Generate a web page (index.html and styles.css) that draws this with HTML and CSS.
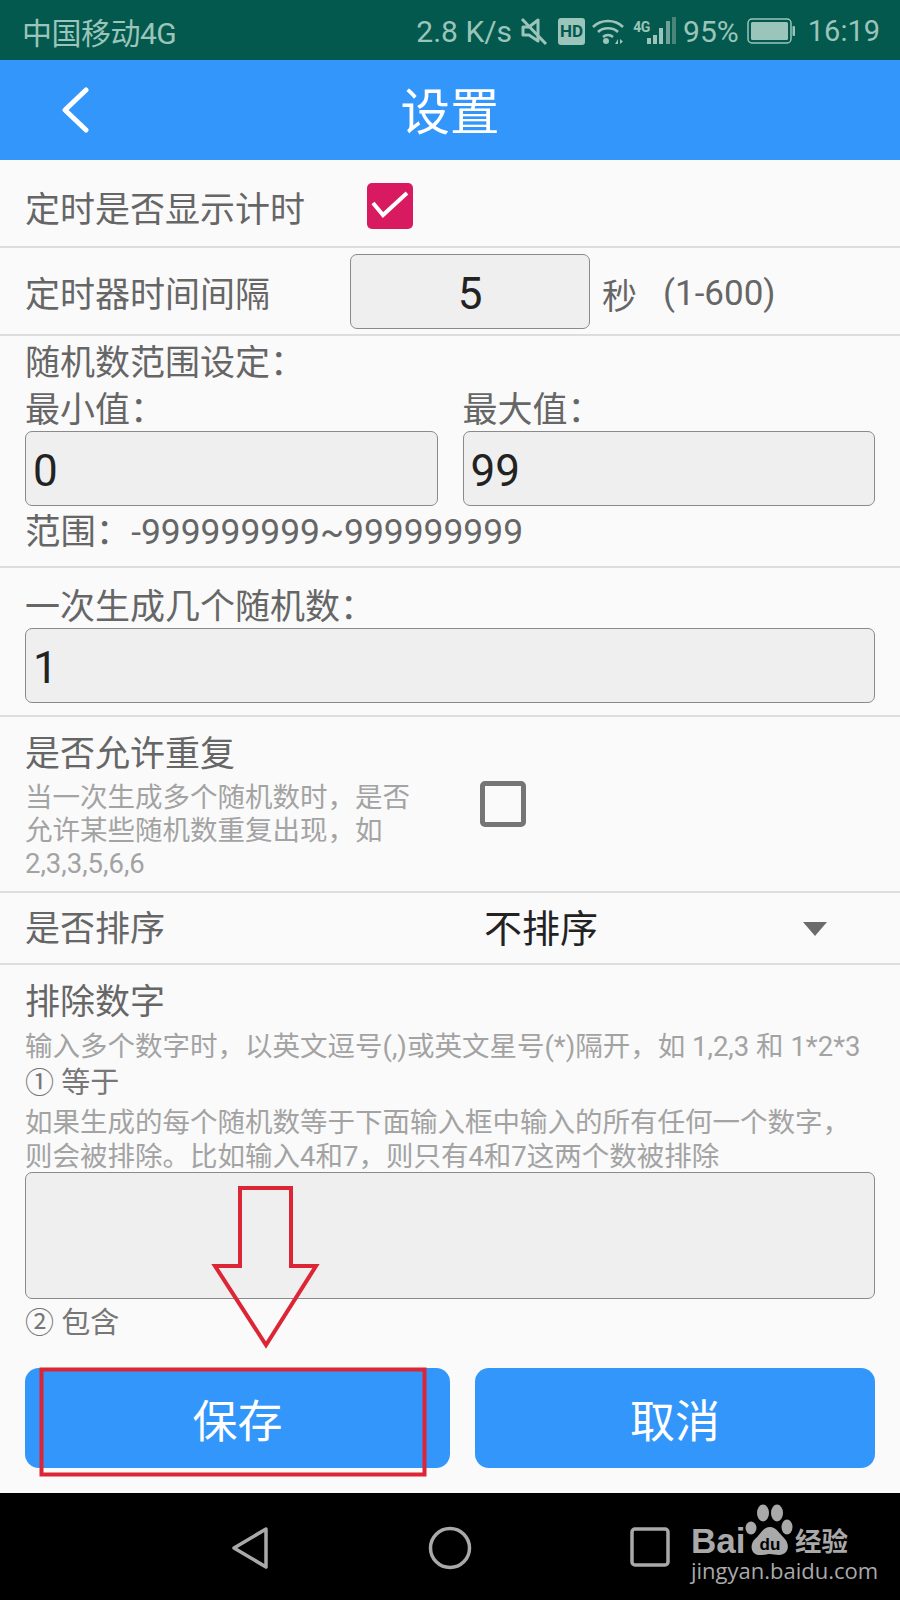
FILE: index.html
```html
<!DOCTYPE html>
<html lang="zh-CN">
<head>
<meta charset="utf-8">
<title>设置</title>
<link rel="stylesheet" href="styles.css">
</head>
<body>
<div class="phone">
  <div class="status">
    <span class="carrier">中国移动4G</span>
    <div class="status-right">
      <span class="speed">2.8 K/s</span>
      <svg class="ic-mute" viewBox="0 0 28 28" width="28" height="28"><path d="M3 10h6l9-7v21l-9-6H3z" fill="none" stroke="#9bc4ba" stroke-width="3" stroke-linejoin="round"/><path d="M2 2l24 25" stroke="#9bc4ba" stroke-width="3" fill="none"/></svg>
      <span class="hd">HD</span>
      <svg class="ic-wifi" viewBox="0 0 34 28" width="34" height="28"><path d="M2 10c8-8 22-8 30 0M7 15c5-5 15-5 20 0M12 20c3-2.500 7-2.500 10 0" fill="none" stroke="#9bc4ba" stroke-width="2.600"/><circle cx="15" cy="24" r="3" fill="#9bc4ba"/><path d="M24 27l3-5v5zM29 22l3 2.500-3 2.500z" fill="#9bc4ba"/></svg>
      <svg class="ic-signal" viewBox="0 0 30 28" width="30" height="28"><rect x="0" y="21" width="4" height="6" fill="#9bc4ba"/><rect x="6" y="18" width="4" height="9" fill="#9bc4ba"/><rect x="12" y="11" width="4" height="16" fill="#9bc4ba"/><rect x="19" y="4" width="4" height="23" fill="#6fa398"/><rect x="25" y="0" width="4" height="27" fill="#4a8579"/></svg>
      <span class="net">4G</span>
      <span class="pct">95%</span>
      <svg class="ic-batt" viewBox="0 0 48 26" width="48" height="26"><rect x="1" y="1" width="43" height="24" rx="4" fill="none" stroke="#9bc4ba" stroke-width="1.500"/><rect x="4" y="4" width="37" height="18" rx="1.500" fill="#9bc4ba"/><rect x="45.500" y="8" width="2.500" height="10" rx="1" fill="#9bc4ba"/></svg>
      <span class="time">16:19</span>
    </div>
  </div>

  <header class="header">
    <svg class="back" viewBox="0 0 28 46" width="28" height="46"><path d="M25 3L4 23l21 20" fill="none" stroke="#fff" stroke-width="5" stroke-linecap="round" stroke-linejoin="round"/></svg>
    <h1 class="title">设置</h1>
  </header>

  <main class="main">
    <div class="row row-show">
      <span class="label label-show">定时是否显示计时</span>
      <span class="check check-on">
        <svg viewBox="0 0 46 46" width="46" height="46"><path d="M6 20l10 12L40 10" fill="none" stroke="#fff" stroke-width="4"/></svg>
      </span>
    </div>

    <div class="row row-interval">
      <span class="label label-interval">定时器时间间隔</span>
      <div class="field field-interval">5</div>
      <span class="label unit">秒</span>
      <span class="label limit">(1-600)</span>
    </div>

    <section class="block block-range">
      <div class="label line-range">随机数范围设定：</div>
      <div class="minmax">
        <div class="col">
          <div class="label line-sub">最小值：</div>
          <div class="field">0</div>
        </div>
        <div class="col">
          <div class="label line-sub">最大值：</div>
          <div class="field">99</div>
        </div>
      </div>
      <div class="label line-limit">范围：-999999999~999999999</div>
    </section>

    <section class="block block-count">
      <div class="label line-count">一次生成几个随机数：</div>
      <div class="field">1</div>
    </section>

    <div class="row row-repeat">
      <div class="repeat-text">
        <div class="label line-head">是否允许重复</div>
        <div class="hint">当一次生成多个随机数时，是否允许某些随机数重复出现，如 2,3,3,5,6,6</div>
      </div>
      <span class="check check-off"></span>
    </div>

    <div class="row row-sort">
      <span class="label label-sort">是否排序</span>
      <span class="sort-value">不排序</span>
      <span class="caret"></span>
    </div>

    <section class="exclude">
      <div class="label line-head">排除数字</div>
      <div class="hint hint-one">输入多个数字时，以英文逗号(,)或英文星号(*)隔开，如 1,2,3 和 1*2*3</div>
      <div class="sub-head">① 等于</div>
      <div class="hint hint-eq">如果生成的每个随机数等于下面输入框中输入的所有任何一个数字，<br>则会被排除。比如输入4和7，则只有4和7这两个数被排除</div>
      <div class="area"></div>
      <div class="sub-head sub-contain">② 包含</div>
      <div class="actions">
        <button class="btn btn-save">保存</button>
        <button class="btn btn-cancel">取消</button>
      </div>
    </section>
  </main>

  <footer class="nav">
    <svg class="nav-back" viewBox="0 0 38 44" width="38" height="44"><path d="M35 3L3 22l32 19z" fill="none" stroke="#a9a9a9" stroke-width="3.500" stroke-linejoin="round"/></svg>
    <svg class="nav-home" viewBox="0 0 44 44" width="44" height="44"><circle cx="22" cy="22" r="19.500" fill="none" stroke="#a9a9a9" stroke-width="3.500"/></svg>
    <svg class="nav-recent" viewBox="0 0 40 40" width="40" height="40"><rect x="2" y="2" width="36" height="36" rx="3" fill="none" stroke="#a9a9a9" stroke-width="3.500"/></svg>
  </footer>

  <div class="wm">
    <span class="wm-bai">Bai</span>
    <svg class="wm-paw" viewBox="0 0 52 56" width="52" height="56">
      <ellipse cx="18" cy="10" rx="6" ry="8.500" fill="#a9a9a9"/>
      <ellipse cx="32" cy="10" rx="6" ry="8.500" fill="#a9a9a9"/>
      <ellipse cx="42" cy="24" rx="5.500" ry="7.500" fill="#a9a9a9"/>
      <ellipse cx="6" cy="25" rx="5.500" ry="6.500" fill="#a9a9a9"/>
      <path d="M25 24c6 0 8 5 14 11 7 7 4 17-5 17-4 0-6-1-9-1s-5 1-10 1c-9 0-11-10-5-16 6-5 8-12 15-12z" fill="#a9a9a9"/>
      <text class="wm-du" x="25" y="47" text-anchor="middle">du</text>
    </svg>
    <span class="wm-jy">经验</span>
    <span class="wm-url">jingyan.baidu.com</span>
  </div>

  <svg class="marks" viewBox="0 0 900 1600" width="900" height="1600">
    <path d="M240 1188h51v78h25l-50 79-51-79h25z" fill="none" stroke="#dc2535" stroke-width="4"/>
    <rect x="41.500" y="1369.500" width="383" height="105" fill="none" stroke="#dc2535" stroke-width="4"/>
  </svg>
</div>
</body>
</html>
```

FILE: styles.css
```css
* { box-sizing: border-box; }
html, body { margin: 0; padding: 0; }
body { font-family: Roboto, "Noto Sans CJK SC", sans-serif; background: #000; }

.phone {
  position: relative;
  width: 900px;
  height: 1600px;
  display: flex;
  flex-direction: column;
  overflow: hidden;
  background: #fafafa;
}

/* status bar */
.status {
  height: 60px;
  flex: none;
  background: #03594d;
  color: #9bc4ba;
  display: flex;
  align-items: center;
  justify-content: space-between;
  padding: 2px 20px 0 22px;
  font-size: 30px;
}
.carrier { font-size: 30px; letter-spacing: -0.5px; }
.status-right { display: flex; align-items: center; position: relative; }
.speed { margin-right: 8px; }
.ic-mute { margin-right: 10px; }
.hd {
  width: 27px;
  height: 27px;
  background: #9bc4ba;
  color: #03594d;
  border-radius: 3px;
  font-size: 17px;
  font-weight: 700;
  line-height: 27px;
  text-align: center;
  margin-right: 6px;
}
.ic-wifi { margin-right: 22px; }
.net {
  position: absolute;
  left: 217px;
  top: 5px;
  font-size: 14px;
  font-weight: 700;
  letter-spacing: -0.5px;
}
.pct { margin: 0 8px 0 6px; }
.ic-batt { margin-right: 13px; }
.time { font-size: 29px; }

/* header */
.header {
  height: 100px;
  flex: none;
  background: #3396fb;
  display: flex;
  align-items: center;
  justify-content: center;
  position: relative;
  padding-top: 6px;
}
.back { position: absolute; left: 61px; top: 27px; }
.title {
  margin: 0;
  color: #fff;
  font-size: 49.500px;
  font-weight: 400;
  line-height: 90px;
}

/* body */
.main { flex: 1; display: flex; flex-direction: column; min-height: 0; }
.label { color: #666; font-size: 35px; }
.row {
  display: flex;
  align-items: center;
  padding-left: 25px;
  border-bottom: 2px solid #ddd;
}
.row-show { height: 88px; padding-top: 6px; }
.label-show { width: 342px; }
.check { display: block; width: 46px; height: 46px; border-radius: 5px; }
.check-on { background: #d81b60; }
.check-on svg { display: block; }
.check-off { border: 5px solid #757575; margin-left: 55px; }

.row-interval { height: 88px; }
.label-interval { width: 325px; }
.field {
  height: 75px;
  background: #efefef;
  border: 1px solid #8a8a8a;
  border-radius: 7px;
  color: #222;
  font-size: 44px;
  line-height: 78px;
  padding-left: 7px;
}
.field-interval { width: 240px; text-align: center; padding-left: 0; }
.unit { margin-left: 12px; padding-top: 4px; }
.limit { margin-left: 26px; padding-top: 4px; }

.block { padding: 0 25px; border-bottom: 2px solid #ddd; }
.block-range { height: 232px; padding-top: 4px; }
.line-range { line-height: 48px; }
.minmax { display: flex; gap: 25px; }
.col { flex: 1; }
.line-sub { line-height: 41px; padding-top: 2px; }
.line-limit { font-size: 35.400px; line-height: 52px; }
.block-count { height: 149px; padding-top: 20px; }
.line-count { line-height: 40px; }

.row-repeat { height: 176px; }
.repeat-text { width: 400px; padding-top: 5px; }
.line-head { line-height: 44px; }
.hint { color: #a3a3a3; font-size: 27.500px; line-height: 33px; }
.repeat-text .hint { margin-top: 4px; }

.row-sort { height: 72px; position: relative; padding-bottom: 5px; }
.label-sort { width: 459px; }
.sort-value { color: #222; font-size: 38px; }
.caret {
  position: absolute;
  right: 73px;
  top: 29px;
  border-left: 12px solid transparent;
  border-right: 12px solid transparent;
  border-top: 14px solid #6b6b6b;
}

.exclude { padding: 16px 25px 0; }
.hint-one { margin-top: 5px; white-space: nowrap; }
.sub-head { color: #777; font-size: 29px; line-height: 40px; }
.hint-eq { line-height: 34px; margin-top: 3px; }
.area {
  height: 127px;
  margin-top: -2px;
  background: #efefef;
  border: 1px solid #8a8a8a;
  border-radius: 7px;
}
.sub-contain { margin-top: 4px; }
.actions { display: flex; gap: 25px; margin-top: 25px; }
.btn {
  height: 100px;
  border: 0;
  border-radius: 14px;
  background: #3396fb;
  color: #fff;
  font: 400 45px Roboto, "Noto Sans CJK SC", sans-serif;
  padding: 0;
}
.btn-save { width: 425px; }
.btn-cancel { width: 400px; }

/* nav */
.nav { height: 107px; flex: none; background: #000; position: relative; }
.nav-back { position: absolute; left: 231px; top: 33px; }
.nav-home { position: absolute; left: 428px; top: 33px; }
.nav-recent { position: absolute; left: 630px; top: 34px; }

/* watermark */
.wm { position: absolute; left: 0; top: 0; color: #a9a9a9; }
.wm-bai {
  position: absolute;
  left: 691px;
  top: 1526px;
  font: 700 35px/30px "Liberation Sans", sans-serif;
}
.wm-paw { position: absolute; left: 745px; top: 1503px; }
.wm-du { font: 700 17px "Liberation Sans", sans-serif; fill: #000; }
.wm-jy {
  position: absolute;
  left: 795px;
  top: 1524px;
  font: 700 26.500px/32px "Noto Sans CJK SC", sans-serif;
  white-space: nowrap;
}
.wm-url {
  position: absolute;
  left: 691px;
  top: 1557px;
  font: 400 22px/26px "Open Sans", sans-serif;
  white-space: nowrap;
}

.marks { position: absolute; left: 0; top: 0; pointer-events: none; }
```
